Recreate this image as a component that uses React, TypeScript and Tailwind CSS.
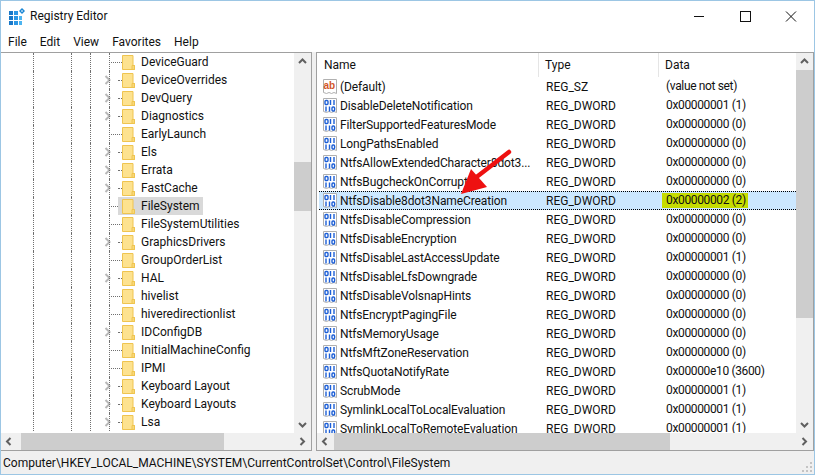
const left: [string, number][] = [
  ["DeviceGuard", 0], ["DeviceOverrides", 1], ["DevQuery", 1], ["Diagnostics", 1], ["EarlyLaunch", 0], ["Els", 1], ["Errata", 1], ["FastCache", 1], ["FileSystem", 0], ["FileSystemUtilities", 0], ["GraphicsDrivers", 1], ["GroupOrderList", 0], ["HAL", 1], ["hivelist", 0], ["hiveredirectionlist", 0], ["IDConfigDB", 1], ["InitialMachineConfig", 0], ["IPMI", 0], ["Keyboard Layout", 1], ["Keyboard Layouts", 1], ["Lsa", 1],
];
const right: [string, string, string][] = [
  ["(Default)", "REG_SZ", "(value not set)"],
  ["DisableDeleteNotification", "REG_DWORD", "0x00000001 (1)"],
  ["FilterSupportedFeaturesMode", "REG_DWORD", "0x00000000 (0)"],
  ["LongPathsEnabled", "REG_DWORD", "0x00000000 (0)"],
  ["NtfsAllowExtendedCharacter8dot3...", "REG_DWORD", "0x00000000 (0)"],
  ["NtfsBugcheckOnCorrupt", "REG_DWORD", "0x00000000 (0)"],
  ["NtfsDisable8dot3NameCreation", "REG_DWORD", "0x00000002 (2)"],
  ["NtfsDisableCompression", "REG_DWORD", "0x00000000 (0)"],
  ["NtfsDisableEncryption", "REG_DWORD", "0x00000000 (0)"],
  ["NtfsDisableLastAccessUpdate", "REG_DWORD", "0x00000001 (1)"],
  ["NtfsDisableLfsDowngrade", "REG_DWORD", "0x00000000 (0)"],
  ["NtfsDisableVolsnapHints", "REG_DWORD", "0x00000000 (0)"],
  ["NtfsEncryptPagingFile", "REG_DWORD", "0x00000000 (0)"],
  ["NtfsMemoryUsage", "REG_DWORD", "0x00000000 (0)"],
  ["NtfsMftZoneReservation", "REG_DWORD", "0x00000000 (0)"],
  ["NtfsQuotaNotifyRate", "REG_DWORD", "0x00000e10 (3600)"],
  ["ScrubMode", "REG_DWORD", "0x00000001 (1)"],
  ["SymlinkLocalToLocalEvaluation", "REG_DWORD", "0x00000001 (1)"],
  ["SymlinkLocalToRemoteEvaluation", "REG_DWORD", "0x00000001 (1)"],
];

function Folder() {
  return (
    <svg width="13" height="15" viewBox="0 0 13 15" className="shrink-0">
      <path d="M.5.5h10.5v10h1.5v4H.5z" fill="#fde28f" stroke="#efc44f" />
      <path d="M10 10.5h2.5v4H10z" fill="#f8d878" stroke="#efc44f" />
    </svg>
  );
}

function Dword() {
  return (
    <svg width="16" height="16" viewBox="0 0 16 16" className="shrink-0">
      <path d="M1.5.5h13v14l-2.5-1-2.5 1-2.5-1-2.5 1-3-1z" fill="#fff" stroke="#b0b0b0" />
      <g fill="none" stroke="#1d5fd6" strokeWidth="1.4">
        <rect x="3" y="2.5" width="3" height="4" rx="1" />
        <path d="M8.5 2v5M12 2v5M4 8.5v5M7.5 8.5v5" />
        <rect x="10" y="9" width="2.6" height="4" rx="1" />
      </g>
    </svg>
  );
}

function AbIcon() {
  return (
    <svg width="16" height="16" viewBox="0 0 16 16" className="shrink-0">
      <path d="M1.5.5h13v14l-2.5-1-2.5 1-2.5-1-2.5 1-3-1z" fill="#fff" stroke="#b0b0b0" />
      <text x="1.5" y="10" fontSize="10" fontWeight="700" fill="#d2562a" fontFamily="Liberation Sans, sans-serif">ab</text>
    </svg>
  );
}

function Chev({ d }: { d: "l" | "r" | "u" | "d" }) {
  const p = { l: "M6.5 2 3 5.5 6.5 9", r: "M3.5 2 7 5.5 3.5 9", u: "M2 7l3.5-3.5L9 7", d: "M2 4l3.5 3.5L9 4" }[d];
  return (
    <svg width="11" height="11" viewBox="0 0 11 11" className="shrink-0">
      <path d={p} fill="none" stroke="#606060" strokeWidth="2" />
    </svg>
  );
}

function TreeRow({ name, hasKids }: { name: string; hasKids: number }) {
  const sel = name === "FileSystem";
  return (
    <div className="flex h-[18px] items-center">
      <div className="h-full w-[32px] shrink-0" />
      <div className="h-full w-[38px] shrink-0 border-l border-dotted border-[#707070]" />
      <div className="h-full w-[19px] shrink-0 border-l border-dotted border-[#707070]" />
      <div className="h-full w-[15px] shrink-0 border-l border-dotted border-[#707070]" />
      <div className="relative flex h-full w-[17px] shrink-0 items-center">
        {hasKids ? (
          <svg width="8" height="10" viewBox="0 0 8 10" className="-ml-[1px]">
            <path d="M1.5 1 5.5 5 1.5 9" fill="none" stroke="#b8b8b8" strokeWidth="2" />
          </svg>
        ) : null}
        <div className="absolute left-[4px] top-0 h-full border-l border-dotted border-[#707070]" />
        <div className={`absolute top-[9px] border-t border-dotted border-[#707070] ${hasKids ? "left-[13px] w-[4px]" : "left-[4px] w-[13px]"}`} />
      </div>
      <div className={`relative -ml-[4px] flex h-full items-center pl-[4px] ${sel ? "bg-[#d9d9d9]" : ""}`}>
        <Folder />
        <span className="pl-[6px] pr-[3px] leading-none">{name}</span>
      </div>
    </div>
  );
}

function VBar({ thumbTop, thumbH }: { thumbTop: string; thumbH: string }) {
  return (
    <div className="flex w-[17px] shrink-0 flex-col bg-[#f0f0f0]">
      <div className="flex h-[17px] shrink-0 items-center justify-center"><Chev d="u" /></div>
      <div className="min-h-0 flex-1">
        <div className={`bg-[#cdcdcd] ${thumbTop} ${thumbH}`} />
      </div>
      <div className="flex h-[17px] shrink-0 items-center justify-center"><Chev d="d" /></div>
    </div>
  );
}

function HBar({ left, width }: { left: string; width: string }) {
  return (
    <div className="flex h-[17px] shrink-0 bg-[#f0f0f0]">
      <div className="flex w-[17px] shrink-0 items-center justify-center"><Chev d="l" /></div>
      <div className="flex min-w-0 flex-1">
        <div className={`h-full bg-[#cdcdcd] ${left} ${width}`} />
      </div>
      <div className="flex w-[17px] shrink-0 items-center justify-center"><Chev d="r" /></div>
    </div>
  );
}

export default function App() {
  return (
    <div className="relative flex h-[475px] w-[815px] flex-col overflow-hidden border border-[#9cc6e4] bg-white font-['Roboto',sans-serif] text-[12px] text-[#111]">
      {/* title */}
      <div className="flex h-[30px] shrink-0 items-center bg-white pl-[8px]">
        <svg width="16" height="17" viewBox="0 0 16 17" className="mt-[1px] shrink-0">
          <path d="M0 3h4v4H0zM0 8h4v4H0zM0 13h4v4H0z" fill="#1878c8" />
          <path d="M5 3h4v4H5zM5 8h4v4H5zM5 13h4v4H5z" fill="#2a96e4" />
          <path d="M10 8h3v4h-3zM10 13h3v4h-3z" fill="#4cb4f0" />
          <path d="M13 0l3 3-3 3-3-3z" fill="#1c87d4" />
          <path d="M13 2l1 1-1 1-1-1z" fill="#fff" />
        </svg>
        <span className="ml-[5px]">Registry Editor</span>
        <div className="ml-auto flex items-center">
          <svg width="46" height="30" viewBox="0 0 46 30"><path d="M18 15.5h10" stroke="#111" /></svg>
          <svg width="46" height="30" viewBox="0 0 46 30"><rect x="18.5" y="10.5" width="10" height="10" fill="none" stroke="#111" /></svg>
          <svg width="46" height="30" viewBox="0 0 46 30"><path d="M18 10.5l10 10M28 10.5l-10 10" stroke="#111" /></svg>
        </div>
      </div>
      {/* menu */}
      <div className="flex h-[21px] shrink-0 items-center gap-[13px] pl-[7px]">
        <span>File</span><span>Edit</span><span>View</span><span>Favorites</span><span>Help</span>
      </div>
      {/* panes */}
      <div className="flex min-h-0 flex-1 gap-[4px] bg-[#f0f0f0]">
        <div className="flex w-[311px] shrink-0 flex-col border-b border-r border-t border-[#a0a0a0]">
          <div className="flex min-h-0 flex-1">
            <div className="min-w-0 flex-1 overflow-hidden bg-white">
              {left.map(([n, k]) => <TreeRow key={n} name={n} hasKids={k} />)}
            </div>
            <VBar thumbTop="mt-[92px]" thumbH="h-[49px]" />
          </div>
          <HBar left="ml-[3px]" width="w-[203px]" />
        </div>
        <div className="flex min-w-0 flex-1 flex-col border border-[#a0a0a0]">
          <div className="flex min-h-0 flex-1">
            <div className="min-w-0 flex-1 overflow-hidden bg-white">
              <div className="flex h-[24px] items-center">
                <span className="w-[222px] border-r border-[#e5e5e5] pl-[7px] leading-[24px]">Name</span>
                <span className="w-[120px] border-r border-[#e5e5e5] pl-[6px] leading-[24px]">Type</span>
                <span className="pl-[6px] leading-[24px]">Data</span>
              </div>
              <div>
                {right.map(([n, t, d], i) => {
                  const sel = i === 6;
                  return (
                    <div key={n} className={`ml-[2px] flex h-[19px] items-center ${sel ? "border-y border-dotted border-black bg-[#cce8ff]" : ""}`}>
                      <div className="flex w-[220px] shrink-0 items-center gap-[2px] pl-[3px]">
                        {i === 0 ? <AbIcon /> : <Dword />}
                        <span className="whitespace-nowrap tracking-[-0.12px]">{n}</span>
                      </div>
                      <span className="w-[120px] shrink-0 pl-[7px]">{t}</span>
                      <span className={`ml-[3px] pl-[4px] pr-[2px] leading-[15px] tracking-[-0.35px] ${sel ? "bg-[#c6dc00]" : ""}`}>{d}</span>
                    </div>
                  );
                })}
              </div>
            </div>
            <VBar thumbTop="" thumbH="h-[248px]" />
          </div>
          <HBar left="" width="w-[336px]" />
        </div>
      </div>
      {/* status */}
      <div className="flex h-[23px] shrink-0 items-center bg-[#f0f0f0] pl-[2px]">
        Computer\HKEY_LOCAL_MACHINE\SYSTEM\CurrentControlSet\Control\FileSystem
      </div>
      {/* annotation arrow */}
      <svg width="60" height="50" viewBox="0 0 60 50" className="absolute left-[455px] top-[148px]">
        <path d="M53 3 18 30" stroke="#ee1111" strokeWidth="4.5" strokeLinecap="round" />
        <path d="M5 45 15 20 31 38z" fill="#ee1111" />
      </svg>
      <svg width="12" height="12" viewBox="0 0 12 12" className="absolute bottom-[1px] right-[1px]">
        <path d="M9 1h2v2H9zM5 5h2v2H5zM9 5h2v2H9zM1 9h2v2H1zM5 9h2v2H5zM9 9h2v2H9z" fill="#c4c4c4" />
      </svg>
    </div>
  );
}
